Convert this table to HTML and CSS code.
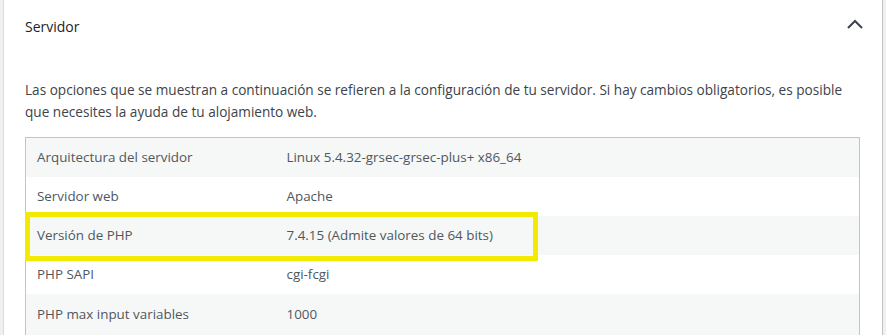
FILE: index.html
```html
<!DOCTYPE html>
<html lang="es">
<head>
    <meta charset="UTF-8">
    <meta name="viewport" content="width=device-width, initial-scale=1.0">
    <title>Salud del sitio - Servidor</title>
    <link rel="stylesheet" href="styles.css">
</head>
<body>

<section class="panel">
    <div class="panel-head">
        <h3>Servidor</h3>
        <svg class="chevron" width="20" height="12" viewBox="0 0 20 12">
            <polyline points="3,10 10,3 17,10" fill="none" stroke="#3c434a" stroke-width="2"/>
        </svg>
    </div>

    <div class="panel-body">
        <p class="intro">Las opciones que se muestran a continuación se refieren a la configuración de tu servidor. Si hay cambios obligatorios, es posible que necesites la ayuda de tu alojamiento web.</p>

        <div class="table-wrap">
            <table class="info-table">
                <tr><td>Arquitectura del servidor</td><td>Linux 5.4.32-grsec-grsec-plus+ x86_64</td></tr>
                <tr><td>Servidor web</td><td>Apache</td></tr>
                <tr><td>Versión de PHP</td><td>7.4.15 (Admite valores de 64 bits)</td></tr>
                <tr><td>PHP SAPI</td><td>cgi-fcgi</td></tr>
                <tr><td>PHP max input variables</td><td>1000</td></tr>
            </table>
            <div class="highlight"></div>
        </div>
    </div>
</section>

</body>
</html>
```

FILE: styles.css
```css
body {
    margin: 0;
    padding: 0 3px;
    background: #f0f0f1;
    font-family: "Open Sans", "Noto Sans", sans-serif;
    font-size: 13px;
    color: #3c434a;
}

.panel {
    background: #fff;
    border-left: 1px solid #dcdcde;
    border-right: 1px solid #c3c4c7;
    height: 335px;
    overflow: hidden;
}

.panel-head {
    display: flex;
    justify-content: space-between;
    align-items: center;
    height: 52px;
    padding: 0 17px 0 21px;
}

.panel-head h3 {
    margin: 0;
    font-size: 14px;
    font-weight: 400;
    color: #1d2327;
}

.chevron {
    display: block;
    margin-top: -4px;
}

.panel-body {
    padding: 0 22px 0 21px;
}

.intro {
    margin: 27px 0 14px;
    font-size: 13.6px;
    line-height: 22px;
}

.table-wrap {
    position: relative;
}

.info-table {
    width: 100%;
    border-collapse: collapse;
    border: 1px solid #c3c4c7;
    border-bottom: none;
    font-size: 13.4px;
    color: #50575e;
}

.info-table td {
    height: 39px;
    padding: 0 11px;
    box-sizing: border-box;
}

.info-table td:first-child {
    width: 250px;
}

.info-table tr:nth-child(odd) {
    background: #f6f7f7;
}

.info-table tr:last-child td {
    height: 41px;
}

/* marker round the PHP version row */
.highlight {
    position: absolute;
    top: 75px;
    left: 0;
    width: 513px;
    height: 49px;
    border: 5px solid #f2ea00;
    box-sizing: border-box;
}
```
